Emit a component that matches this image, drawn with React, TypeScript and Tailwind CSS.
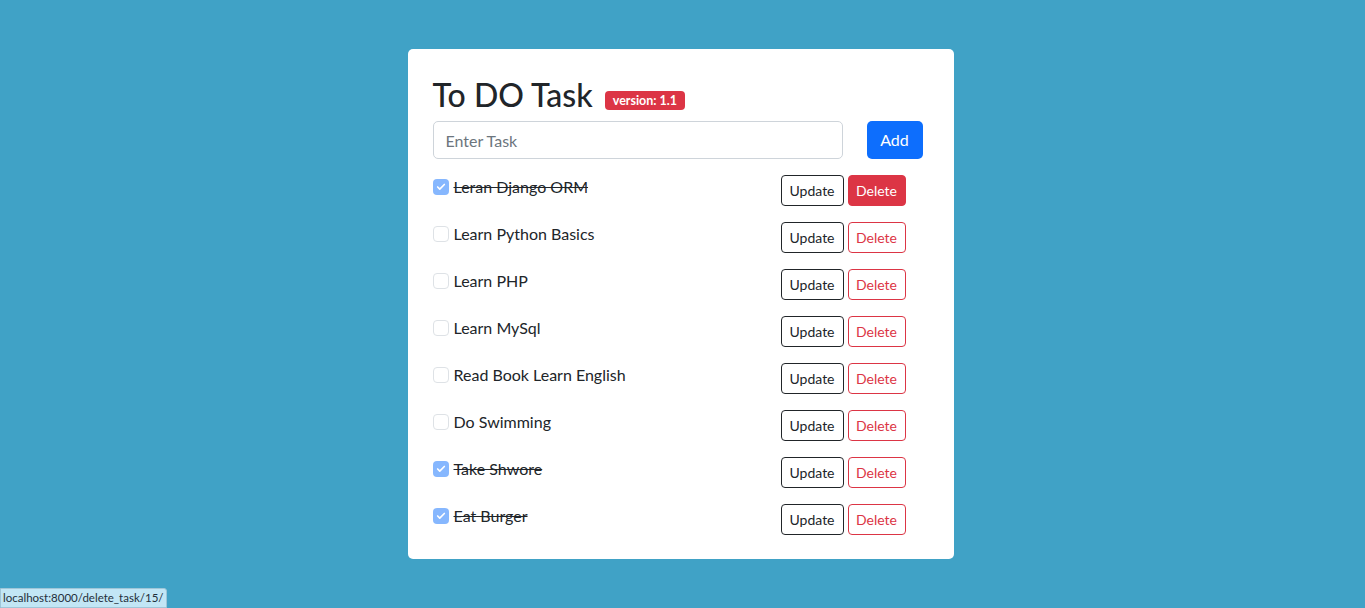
import { Check } from 'lucide-react'

const tasks = [
  { title: 'Leran Django ORM', done: true },
  { title: 'Learn Python Basics', done: false },
  { title: 'Learn PHP', done: false },
  { title: 'Learn MySql', done: false },
  { title: 'Read Book Learn English', done: false },
  { title: 'Do Swimming', done: false },
  { title: 'Take Shwore', done: true },
  { title: 'Eat Burger', done: true },
]

function TaskRow({ title, done, hot }: { title: string; done: boolean; hot: boolean }) {
  return (
    <div className="flex items-start justify-between">
      <div className="flex items-center h-[24px] gap-[5px]">
        {done ? (
          <span className="w-[16px] h-[16px] rounded-[4px] bg-[#86b7fe] flex items-center justify-center">
            <Check className="w-[10px] h-[10px] text-white" strokeWidth={4} />
          </span>
        ) : (
          <span className="w-[16px] h-[16px] rounded-[4px] border border-[#dee2e6] bg-white" />
        )}
        <span className={`text-[16px] leading-[24px] text-[#212529] ${done ? 'line-through' : ''}`}>{title}</span>
      </div>
      <div className="flex gap-[4px] mr-[23px]">
        <button className="h-[31px] w-[63px] border border-[#212529] rounded-[4px] text-[14px] text-[#212529] bg-white">
          Update
        </button>
        {hot ? (
          <button className="h-[31px] w-[58px] border border-[#dc3545] rounded-[4px] text-[14px] text-white bg-[#dc3545]">
            Delete
          </button>
        ) : (
          <button className="h-[31px] w-[58px] border border-[#dc3545] rounded-[4px] text-[14px] text-[#dc3545] bg-white">
            Delete
          </button>
        )}
      </div>
    </div>
  )
}

export default function App() {
  return (
    <div className="min-h-[608px] bg-[#40a2c6] font-['Lato',sans-serif] relative">
      <div className="pt-[49px] pr-[4px] flex justify-center">
        <div className="w-[546px] bg-white rounded-[5px] px-[25px] pt-[26px] pb-[24px]">
          <div className="flex items-center gap-[12px] h-[40px]">
            <h1 className="text-[32px] leading-[40px] font-medium text-[#212529]">To DO Task</h1>
            <span className="mt-[10px] bg-[#dc3545] text-white text-[12.5px] font-bold rounded-[4px] px-[8px] h-[19px] leading-[19px]">
              version: 1.1
            </span>
          </div>
          <div className="flex items-center mt-[6px] gap-[24px] pr-[6px]">
            <input
              type="text"
              placeholder="Enter Task"
              className="flex-1 h-[38px] border border-[#ced4da] rounded-[5px] px-[12px] text-[16px] placeholder:text-[#6c757d] outline-none"
            />
            <button className="h-[38px] w-[56px] bg-[#0d6efd] text-white text-[16px] rounded-[5px]">Add</button>
          </div>
          <div className="mt-[16px] flex flex-col gap-[16px]">
            {tasks.map((t, i) => (
              <TaskRow key={t.title} title={t.title} done={t.done} hot={i === 0} />
            ))}
          </div>
        </div>
      </div>
      <div className="absolute left-0 bottom-0 h-[20px] px-[2px] bg-[#c2e6f5] border border-[#9fc6d8] rounded-tr-[3px] text-[11.5px] leading-[18px] text-[#1f2f3a]">
        localhost:8000/delete_task/15/
      </div>
    </div>
  )
}
